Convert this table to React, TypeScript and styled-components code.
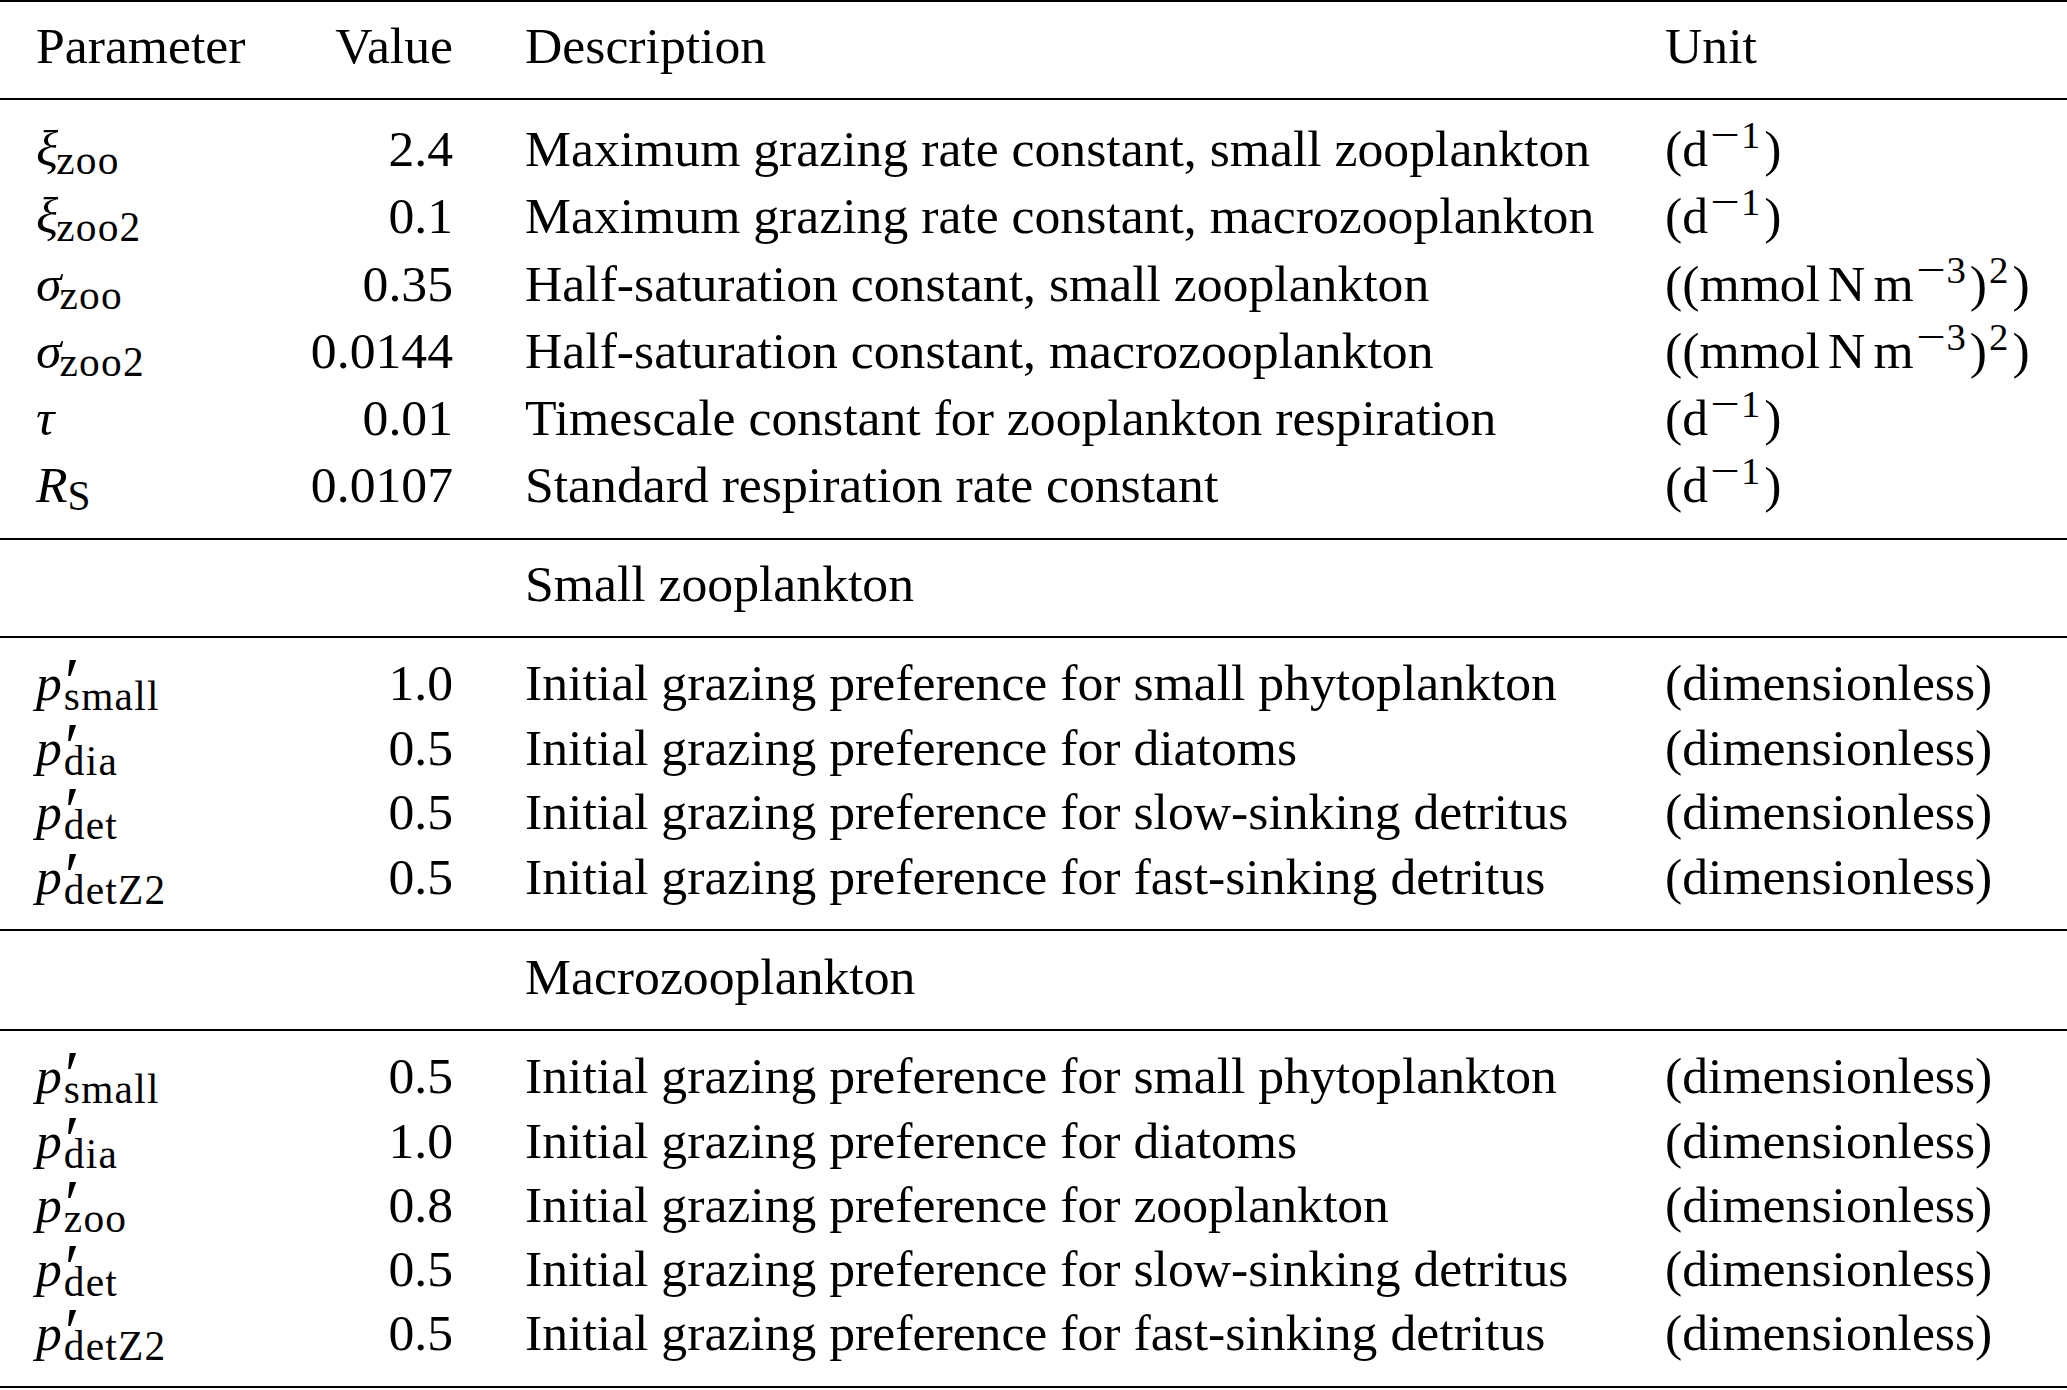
import React from "react"
import styled, { createGlobalStyle } from "styled-components"

const GlobalStyle = createGlobalStyle`
  html, body {
    margin: 0;
    padding: 0;
    background: #ffffff;
  }
  body {
    font-family: "Liberation Serif", "Times New Roman", serif;
    color: #000000;
  }
`

type RowData = {
  symbol: string
  sub?: string
  prime?: boolean
  value: string
  description: string
  unit: "rate" | "conc" | "none"
}

const rates: RowData[] = [
  { symbol: "ξ", sub: "zoo", value: "2.4", description: "Maximum grazing rate constant, small zooplankton", unit: "rate" },
  { symbol: "ξ", sub: "zoo2", value: "0.1", description: "Maximum grazing rate constant, macrozooplankton", unit: "rate" },
  { symbol: "σ", sub: "zoo", value: "0.35", description: "Half-saturation constant, small zooplankton", unit: "conc" },
  { symbol: "σ", sub: "zoo2", value: "0.0144", description: "Half-saturation constant, macrozooplankton", unit: "conc" },
  { symbol: "τ", value: "0.01", description: "Timescale constant for zooplankton respiration", unit: "rate" },
  { symbol: "R", sub: "S", value: "0.0107", description: "Standard respiration rate constant", unit: "rate" },
]

const smallZoo: RowData[] = [
  { symbol: "p", prime: true, sub: "small", value: "1.0", description: "Initial grazing preference for small phytoplankton", unit: "none" },
  { symbol: "p", prime: true, sub: "dia", value: "0.5", description: "Initial grazing preference for diatoms", unit: "none" },
  { symbol: "p", prime: true, sub: "det", value: "0.5", description: "Initial grazing preference for slow-sinking detritus", unit: "none" },
  { symbol: "p", prime: true, sub: "detZ2", value: "0.5", description: "Initial grazing preference for fast-sinking detritus", unit: "none" },
]

const macroZoo: RowData[] = [
  { symbol: "p", prime: true, sub: "small", value: "0.5", description: "Initial grazing preference for small phytoplankton", unit: "none" },
  { symbol: "p", prime: true, sub: "dia", value: "1.0", description: "Initial grazing preference for diatoms", unit: "none" },
  { symbol: "p", prime: true, sub: "zoo", value: "0.8", description: "Initial grazing preference for zooplankton", unit: "none" },
  { symbol: "p", prime: true, sub: "det", value: "0.5", description: "Initial grazing preference for slow-sinking detritus", unit: "none" },
  { symbol: "p", prime: true, sub: "detZ2", value: "0.5", description: "Initial grazing preference for fast-sinking detritus", unit: "none" },
]

// superscript power, with a long math minus when negative
const Power = ({ n, neg }: { n: string; neg?: boolean }) => (
  <Sup>
    {neg && <Minus>−</Minus>}
    {n}
  </Sup>
)

const Unit = ({ kind }: { kind: RowData["unit"] }) => {
  if (kind === "rate") {
    return (
      <>
        (d<Power n="1" neg />)
      </>
    )
  }
  if (kind === "conc") {
    return (
      <>
        ((mmol<Thin />N<Thin />m<Power n="3" neg />)<Power n="2" />)
      </>
    )
  }
  return <>(dimensionless)</>
}

const Param = ({ row }: { row: RowData }) => (
  <>
    <MathVar>{row.symbol}</MathVar>
    {row.prime && <Prime>′</Prime>}
    {row.sub && (
      <Sub $low={row.prime ? 10 : 8} $pull={row.symbol === "R" ? 0 : row.prime ? 1 : 2}>
        {row.sub}
      </Sub>
    )}
  </>
)

const Rows = ({ rows, height }: { rows: RowData[]; height: number }) => (
  <>
    {rows.map((row, i) => (
      <Row key={i} $h={height}>
        <ParamCell>
          <Param row={row} />
        </ParamCell>
        <ValueCell>{row.value}</ValueCell>
        <DescCell>{row.description}</DescCell>
        <UnitCell>
          <Unit kind={row.unit} />
        </UnitCell>
      </Row>
    ))}
  </>
)

export default function App() {
  return (
    <>
      <GlobalStyle />
      <Table>
        <Section $pt={11.5} $pb={20}>
          <Row $h={64.5}>
            <ParamCell>Parameter</ParamCell>
            <ValueCell>Value</ValueCell>
            <DescCell>Description</DescCell>
            <UnitCell>Unit</UnitCell>
          </Row>
        </Section>

        <Section $pt={15} $pb={19}>
          <Rows rows={rates} height={67.3} />
        </Section>

        <Section $pt={12.5} $pb={19}>
          <Row $h={64.5}>
            <ParamCell />
            <ValueCell />
            <DescCell>Small zooplankton</DescCell>
            <UnitCell />
          </Row>
        </Section>

        <Section $pt={13.5} $pb={19.5}>
          <Rows rows={smallZoo} height={64.5} />
        </Section>

        <Section $pt={14.5} $pb={19}>
          <Row $h={64.5}>
            <ParamCell />
            <ValueCell />
            <DescCell>Macrozooplankton</DescCell>
            <UnitCell />
          </Row>
        </Section>

        <Section $pt={13.5} $pb={20}>
          <Rows rows={macroZoo} height={64.3} />
        </Section>
      </Table>
    </>
  )
}

const Table = styled.div`
  width: 2067px;
  border-top: 2px solid #000;
  font-size: 51.7px;
`

const Section = styled.div<{ $pt: number; $pb: number }>`
  padding: ${(p) => p.$pt}px 0 ${(p) => p.$pb}px;
  border-bottom: 2px solid #000;
`

const Row = styled.div<{ $h: number }>`
  display: grid;
  grid-template-columns: 200px 253px 1212px 1fr;
  height: ${(p) => p.$h}px;
  line-height: ${(p) => p.$h}px;
  white-space: nowrap;
`

const ParamCell = styled.div`
  padding-left: 36px;
`

const ValueCell = styled.div`
  text-align: right;
`

const DescCell = styled.div`
  padding-left: 72px;
`

const UnitCell = styled.div``

const MathVar = styled.span`
  font-style: italic;
`

const Sub = styled.span<{ $low: number; $pull: number }>`
  font-size: 0.8em;
  line-height: 0;
  vertical-align: -${(p) => p.$low}px;
  letter-spacing: 0.03em;
  margin-left: -${(p) => p.$pull}px;
`

const Prime = styled.span`
  display: inline-block;
  width: 0;
  font-size: 1.3em;
  line-height: 0;
  vertical-align: -4px;
  margin-left: 3px;
`

const Sup = styled.span`
  font-size: 0.75em;
  line-height: 0;
  vertical-align: 18px;
  padding: 0 4px 0 2px;
`

const Minus = styled.span`
  display: inline-block;
  transform: scaleX(1.35);
  margin: 0 5px 0 4px;
`

const Thin = styled.span`
  display: inline-block;
  width: 8px;
`
